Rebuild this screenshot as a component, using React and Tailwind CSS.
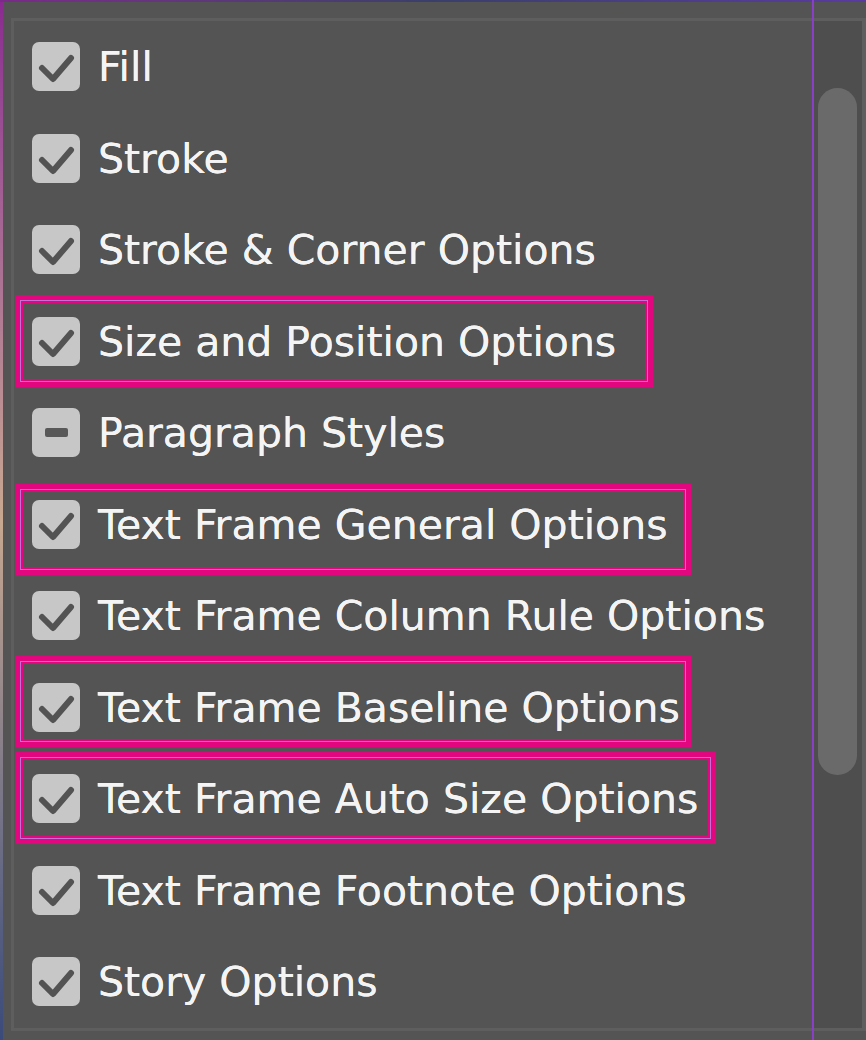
import React from "react";

const rows = [
  { label: "Fill" },
  { label: "Stroke" },
  { label: "Stroke & Corner Options" },
  { label: "Size and Position Options", box: { top: -1, left: 1, w: 638, h: 92 } },
  { label: "Paragraph Styles", mixed: true },
  { label: "Text Frame General Options", box: { top: 5, left: 1, w: 676, h: 91 } },
  { label: "Text Frame Column Rule Options" },
  { label: "Text Frame Baseline Options", box: { top: -6, left: 1, w: 676, h: 91 } },
  { label: "Text Frame Auto Size Options", box: { top: -1, left: 1, w: 701, h: 92 } },
  { label: "Text Frame Footnote Options" },
  { label: "Story Options" },
];

function Check({ mixed }) {
  return (
    <div className="w-[48px] h-[49px] rounded-[7px] bg-[#c7c7c7] flex items-center justify-center shrink-0">
      {mixed ? (
        <div className="w-[23px] h-[9px] rounded-[2px] bg-[#585858]" />
      ) : (
        <svg width="48" height="49" viewBox="0 0 48 49">
          <path d="M10 26 L21 37 L39 16" fill="none" stroke="#535353" strokeWidth="6" strokeLinecap="round" strokeLinejoin="round" />
        </svg>
      )}
    </div>
  );
}

export default function App() {
  return (
    <div className="w-[866px] h-[1040px] bg-[#545454] relative overflow-hidden font-['DejaVu_Sans',sans-serif]">
      <div className="h-[2px] bg-gradient-to-r from-[#7b2a8a] via-[#3a3f6a] to-[#5a3aa0]" />
      <div className="flex h-[1038px]">
        <div className="w-[3px] bg-gradient-to-b from-[#8a2a90] via-[#c8a890] to-[#3a4a7a]" />
        <div className="flex-1 pl-[8px] pt-[16px] pb-[9px] pr-0">
          <div className="h-full border-[3px] border-r-[4px] border-[#5e5e5e] flex">
            <div className="flex-1 flex flex-col">
              {rows.map((r, i) => (
                <div key={i} className="relative h-[91.5px] flex items-center pl-[18px] shrink-0">
                  {r.box && (
                    <div
                      className="absolute shadow-[inset_0_0_0_5px_#e2067f,inset_0_0_0_6px_#c46fd6,inset_0_0_0_8px_#e2067f]"
                      style={{ top: r.box.top, left: r.box.left, width: r.box.w, height: r.box.h }}
                    />
                  )}
                  <Check mixed={r.mixed} />
                  <span className="ml-[18px] text-[41px] leading-none text-[#f4f4f4] whitespace-nowrap relative top-[1px] [text-shadow:0_0_0.6px_#ffffff]">
                    {r.label}
                  </span>
                </div>
              ))}
            </div>
            <div className="w-[49px] bg-[#4e4e4e] pt-[67px] px-[5px]">
              <div className="h-[687px] rounded-full bg-[#6a6a6a]" />
            </div>
          </div>
        </div>
      </div>
      <div className="absolute top-0 bottom-0 left-[812px] w-[2px] bg-[#8a3fc8]" />
    </div>
  );
}
